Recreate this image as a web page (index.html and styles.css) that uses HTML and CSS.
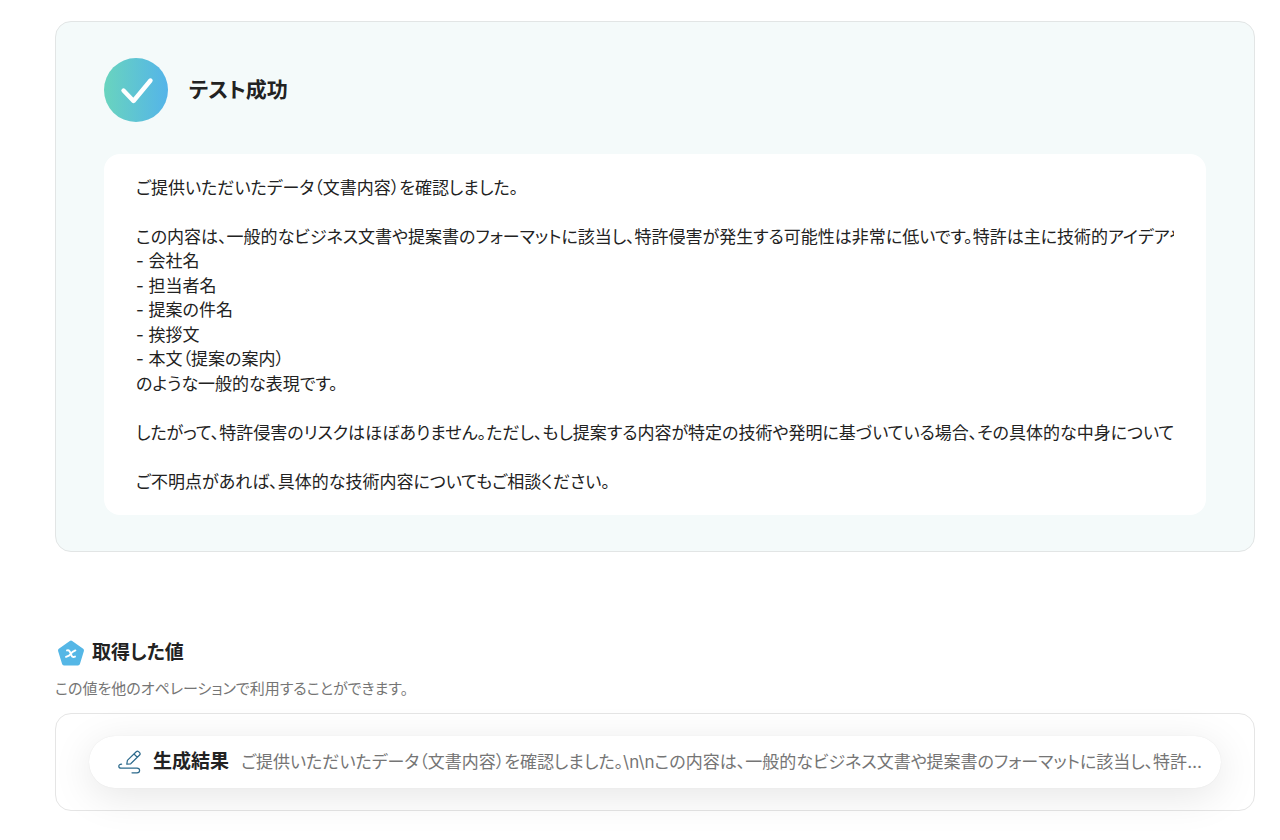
FILE: index.html
```html
<!DOCTYPE html>
<html lang="ja">
<head>
    <meta charset="UTF-8">
    <meta name="viewport" content="width=device-width, initial-scale=1.0">
    <title>テスト成功</title>
    <link rel="stylesheet" href="styles.css">
</head>
<body>
    <main class="container">
        <section class="result-card">
            <div class="result-header">
                <svg class="check-icon" viewBox="0 0 64 64" aria-hidden="true">
                    <defs>
                        <linearGradient id="checkGradient" x1="0" y1="0" x2="1" y2="0">
                            <stop offset="0" stop-color="#69d4be"/>
                            <stop offset="1" stop-color="#54b4e9"/>
                        </linearGradient>
                    </defs>
                    <circle cx="32" cy="32" r="32" fill="url(#checkGradient)"/>
                    <path d="M19.5 32.5L29.5 43L46.5 22.5" fill="none" stroke="#fff" stroke-width="4.4" stroke-linecap="round" stroke-linejoin="round"/>
                </svg>
                <h1>テスト成功</h1>
            </div>
            <div class="result-body">ご提供いただいたデータ（文書内容）を確認しました。

この内容は、一般的なビジネス文書や提案書のフォーマットに該当し、特許侵害が発生する可能性は非常に低いです。特許は主に技術的アイデアや
- 会社名
- 担当者名
- 提案の件名
- 挨拶文
- 本文（提案の案内）
のような一般的な表現です。

したがって、特許侵害のリスクはほぼありません。ただし、もし提案する内容が特定の技術や発明に基づいている場合、その具体的な中身については

ご不明点があれば、具体的な技術内容についてもご相談ください。</div>
        </section>

        <section class="values">
            <div class="values-header">
                <svg class="value-icon" viewBox="0 0 32 32" aria-hidden="true">
                    <path d="M16 5.5L27 13.4L23 26.5H9L5 13.4Z" fill="#55b7e6" stroke="#55b7e6" stroke-width="4" stroke-linejoin="round"/>
                    <path d="M12 13.4C13.4 12.8 14.2 13.2 14.8 14.6L16.6 18.6C17.2 20 18.4 20.3 20 19.6M20.4 13.4L17.6 14.8L14 18.6L11 19.8" fill="none" stroke="#fff" stroke-width="1.9" stroke-linecap="round" stroke-linejoin="round"/>
                </svg>
                <h2>取得した値</h2>
            </div>
            <p class="description">この値を他のオペレーションで利用することができます。</p>
            <div class="value-list">
                <div class="value-item">
                    <svg class="pen-icon" viewBox="0 0 24 24" aria-hidden="true">
                        <g fill="none" stroke="#2c6a8c" stroke-width="1.2" stroke-linecap="round" stroke-linejoin="round">
                            <path d="M8.8 14.2L9.4 10.4L18.2 1.7Q19.4.6 20.6 1.7L21.6 2.7Q22.7 3.9 21.6 5L12.7 13.8L8.8 14.2ZM16 4L19.3 7.2"/>
                            <path d="M3.6 14.2C1.4 14.2.8 15.2.8 16.2C.8 17.6 1.7 18.2 3.2 18.2H19C21 18.2 21.6 19 21.6 20.4C21.6 22 21 22.8 19 22.8H14"/>
                        </g>
                    </svg>
                    <span class="value-name">生成結果</span>
                    <span class="value-text">ご提供いただいたデータ（文書内容）を確認しました。\n\nこの内容は、一般的なビジネス文書や提案書のフォーマットに該当し、特許侵害が発生する可能性は非常に低いです。</span>
                </div>
            </div>
        </section>
    </main>
</body>
</html>
```
FILE: styles.css
```css
* {
    box-sizing: border-box;
}
body {
    margin: 0;
    background: #fff;
    color: #222;
    font-family: Inter, "Noto Sans CJK JP", sans-serif;
    font-feature-settings: "palt";
}
h1, h2, p {
    margin: 0;
}
.container {
    padding: 21px 25px 29px 55px;
}
.result-card {
    padding: 36px 48px;
    border: 1px solid #e2e5e5;
    border-radius: 16px;
    background: #f4fafa;
}
.result-header {
    display: flex;
    align-items: center;
    gap: 21px;
    margin-bottom: 32px;
}
.check-icon {
    width: 64px;
    height: 64px;
}
h1 {
    font-size: 21px;
    line-height: 32px;
    font-weight: 600;
}
.result-body {
    padding: 22px 0 21px;
    border: solid #fff;
    border-width: 0 32px;
    border-radius: 16px;
    background: #fff;
    font-size: 17px;
    line-height: 1.44;
    white-space: pre;
    overflow: hidden;
}
.values {
    margin-top: 85px;
}
.values-header {
    display: flex;
    align-items: center;
    gap: 5px;
}
.value-icon {
    width: 32px;
    height: 32px;
}
h2 {
    font-size: 19px;
    line-height: 32px;
    font-weight: 600;
}
.description {
    margin: 9px 0 14px;
    color: #757575;
    font-size: 15px;
    line-height: 21px;
}
.value-list {
    padding: 22px 33px;
    border: 1px solid #e5e5e5;
    border-radius: 16px;
}
.value-item {
    display: flex;
    align-items: center;
    padding: 12px 16px 12px 29px;
    border-radius: 26px;
    background: #fff;
    box-shadow: 0 8px 40px rgba(0, 0, 0, 0.1), 0 0 1px rgba(0, 0, 0, 0.1);
    line-height: 28px;
}
.pen-icon {
    flex: none;
    width: 24px;
    height: 24px;
    margin-right: 11px;
}
.value-name {
    flex: none;
    margin-right: 12px;
    font-size: 19px;
    font-weight: 600;
}
.value-text {
    color: #757575;
    font-size: 17px;
    white-space: nowrap;
    overflow: hidden;
    text-overflow: ellipsis;
}
```
